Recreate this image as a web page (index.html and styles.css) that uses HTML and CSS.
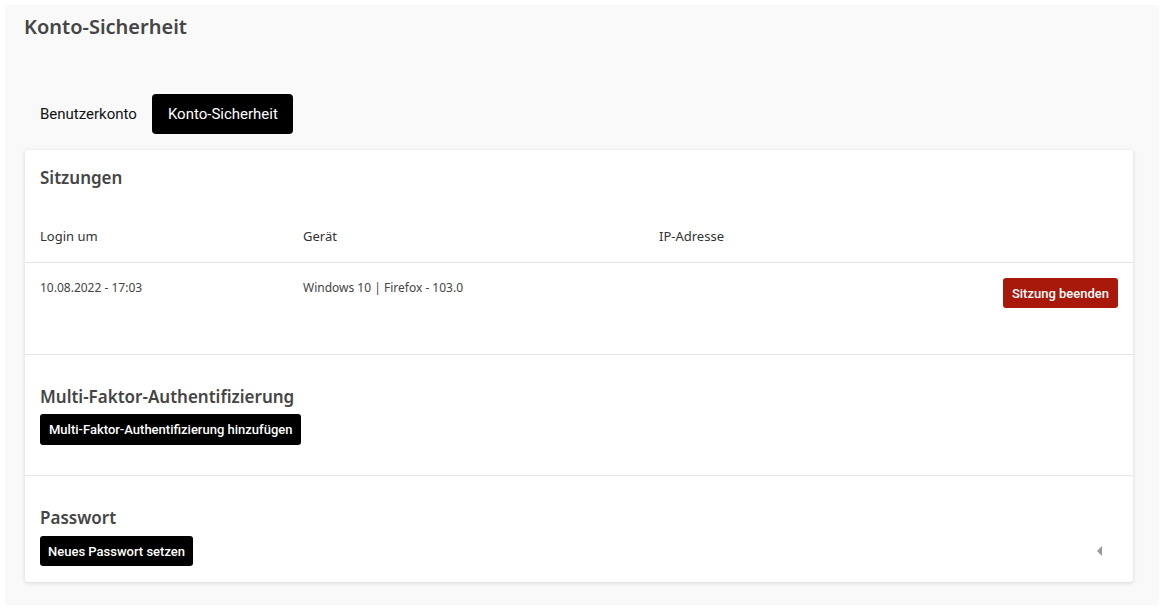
FILE: index.html
```html
<!DOCTYPE html>
<html lang="de">
<head>
<meta charset="utf-8">
<title>Konto-Sicherheit</title>
<link rel="stylesheet" href="styles.css">
</head>
<body>
<div class="page">
  <h1 class="page-title">Konto-Sicherheit</h1>
  <nav class="tabs">
    <a class="tab">Benutzerkonto</a>
    <a class="tab active">Konto-Sicherheit</a>
  </nav>
  <div class="card">
    <section class="section sessions">
      <h2 class="section-title">Sitzungen</h2>
      <div class="table">
        <div class="row head">
          <div class="cell c1">Login um</div>
          <div class="cell c2">Gerät</div>
          <div class="cell c3">IP-Adresse</div>
          <div class="cell c4"></div>
        </div>
        <div class="row body">
          <div class="cell c1">10.08.2022 - 17:03</div>
          <div class="cell c2">Windows 10 | Firefox - 103.0</div>
          <div class="cell c3"></div>
          <div class="cell c4"><button class="btn btn-danger">Sitzung beenden</button></div>
        </div>
      </div>
    </section>
    <section class="section mfa">
      <h2 class="section-title">Multi-Faktor-Authentifizierung</h2>
      <button class="btn btn-dark">Multi-Faktor-Authentifizierung hinzufügen</button>
    </section>
    <section class="section password">
      <h2 class="section-title">Passwort</h2>
      <button class="btn btn-dark">Neues Passwort setzen</button>
    </section>
    <span class="caret"></span>
  </div>
</div>
</body>
</html>
```
FILE: styles.css
```css
html, body {
  margin: 0;
  padding: 0;
  background: #ffffff;
}
.page {
  margin: 5px;
  height: 600px;
  box-sizing: border-box;
  background: #f9f9f9;
  padding: 10px 26px 0 20px;
  font-family: "Noto Sans", "Open Sans", sans-serif;
  color: #333;
}
.page-title {
  margin: 0 0 0 -1px;
  font-size: 20px;
  line-height: 24px;
  font-weight: 600;
  color: #454545;
}
.tabs {
  display: flex;
  gap: 2px;
  margin-top: 55px;
  font-family: Roboto, sans-serif;
  font-size: 15px;
}
.tab {
  display: flex;
  align-items: center;
  height: 40px;
  padding: 0 13px 0 15px;
  border-radius: 4px;
  color: #111;
}
.tab.active {
  background: #000;
  color: #fff;
  padding: 0 15px 0 16px;
}
.card {
  position: relative;
  margin-top: 16px;
  background: #fff;
  border-radius: 3px;
  box-shadow: 0 1px 4px rgba(0,0,0,0.14);
}
.section {
  padding: 30px 15px 30px 15px;
  border-top: 1px solid #e6e6e6;
}
.section.sessions {
  border-top: none;
  padding-top: 16px;
  padding-bottom: 46px;
}
.section.password {
  padding-bottom: 16px;
}
.section-title {
  margin: 0;
  font-size: 17px;
  line-height: 24px;
  font-weight: 600;
  color: #454545;
}
.sessions .section-title {
  margin-bottom: 20px;
}
.mfa .section-title {
  margin-bottom: 5px;
}
.password .section-title {
  margin-bottom: 6px;
}
.row {
  display: grid;
  grid-template-columns: 263px 356px 1fr auto;
}
.row.head {
  height: 52px;
  align-items: center;
  border-bottom: 1px solid #e2e2ea;
  margin: 0 -15px;
  padding: 0 15px;
  font-size: 13px;
  color: #333;
}
.row.body {
  padding-top: 15px;
  font-size: 12px;
  color: #444;
}
.row.body .cell {
  line-height: 20px;
}
.btn {
  border: none;
  border-radius: 3px;
  font-family: Roboto, sans-serif;
  font-weight: 500;
  font-size: 13px;
  color: #fff;
  padding: 0 9px;
  height: 31px;
  cursor: pointer;
}
.btn-danger {
  background: #a8180b;
  height: 30px;
}
.btn-dark {
  background: #000;
}
.password .btn-dark {
  height: 30px;
  padding: 0 8px;
}
.caret {
  position: absolute;
  right: 31px;
  bottom: 26px;
  width: 0;
  height: 0;
  border-top: 5px solid transparent;
  border-bottom: 5px solid transparent;
  border-right: 5px solid #9a9a9a;
}
```
